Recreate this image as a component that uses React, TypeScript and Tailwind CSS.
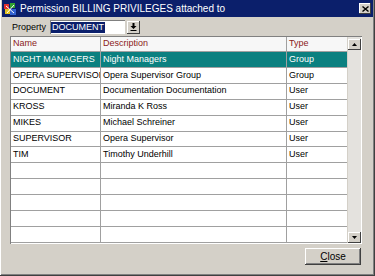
import React from "react";

const rows: [string, string, string][] = [
  ["NIGHT MANAGERS", "Night Managers", "Group"],
  ["OPERA SUPERVISOR", "Opera Supervisor Group", "Group"],
  ["DOCUMENT", "Documentation Documentation", "User"],
  ["KROSS", "Miranda K Ross", "User"],
  ["MIKES", "Michael Schreiner", "User"],
  ["SUPERVISOR", "Opera Supervisor", "User"],
  ["TIM", "Timothy Underhill", "User"],
  ["", "", ""],
  ["", "", ""],
  ["", "", ""],
  ["", "", ""],
  ["", "", ""],
];

function AppIcon() {
  return (
    <svg width="14" height="14" viewBox="0 0 14 14">
      <rect x="1" y="2" width="5" height="5" fill="#e03030" />
      <rect x="7" y="1" width="5" height="5" fill="#30a030" />
      <rect x="2" y="7" width="5" height="5" fill="#e0c020" />
      <rect x="7" y="7" width="6" height="6" fill="#3060d0" />
      <path d="M3 4 L11 11 M11 3 L4 11" stroke="#fff" strokeWidth="1" />
    </svg>
  );
}

export default function App() {
  return (
    <div className="w-[375px] h-[276px] bg-[#d4d0c8] flex flex-col px-[2px] pb-[2px] font-['Liberation_Sans',Arial,sans-serif] text-[9px] text-black shadow-[inset_-1px_-1px_#404040,inset_1px_0_#fff,inset_-2px_-2px_#808080]">
      {/* Title bar */}
      <div className="h-[17px] bg-[#0b1f6b] flex items-center pl-[1px] pr-[2px]">
        <AppIcon />
        <span className="ml-[3px] text-white text-[10px] leading-none">
          Permission BILLING PRIVILEGES attached to
        </span>
        <div className="ml-auto w-[12px] h-[11px] bg-[#d4d0c8] flex items-center justify-center shadow-[inset_-1px_-1px_#404040,inset_1px_1px_#fff]">
          <svg width="7" height="6" viewBox="0 0 7 6">
            <path d="M0.5 0.5 L6.5 5.5 M6.5 0.5 L0.5 5.5" stroke="#000" strokeWidth="1.4" />
          </svg>
        </div>
      </div>

      {/* Property row */}
      <div className="mt-[3px] h-[14px] flex items-center pl-[10px]">
        <span className="leading-none">Property</span>
        <div className="ml-[4px] w-[75px] h-[14px] bg-white flex items-center pl-[1px] shadow-[inset_1px_1px_#808080,inset_-1px_-1px_#fff]">
          <span className="bg-[#0b1f6b] text-white leading-[11px] h-[11px] px-[1px]">DOCUMENT</span>
        </div>
        <div className="ml-[2px] w-[13px] h-[13px] bg-[#d4d0c8] flex items-center justify-center shadow-[inset_-1px_-1px_#404040,inset_1px_1px_#fff]">
          <svg width="7" height="8" viewBox="0 0 7 8">
            <path d="M2.5 0 H4.5 V3 H6.5 L3.5 6 L0.5 3 H2.5 Z" fill="#000" />
            <rect x="0.5" y="7" width="6" height="1" fill="#000" />
          </svg>
        </div>
      </div>

      {/* Table */}
      <div className="mt-[2px] ml-[8px] w-[352px] h-[208px] flex p-[1px] shadow-[inset_1px_1px_#808080,inset_-1px_-1px_#fff]">
        <div className="flex-1 flex flex-col bg-white">
          <div className="h-[15px] flex border-b border-[#a0a0a0] bg-[#f7f7f7] text-[#8b1a1a]">
            <div className="w-[90px] border-r border-[#a0a0a0] pl-[2px] flex items-center">Name</div>
            <div className="w-[186px] border-r border-[#a0a0a0] pl-[2px] flex items-center">Description</div>
            <div className="flex-1 pl-[2px] flex items-center">Type</div>
          </div>
          {rows.map((r, i) => {
            const sel = i === 0;
            return (
              <div
                key={i}
                className={
                  sel
                    ? "h-[16px] flex border-b border-[#a0a0a0] bg-[#0b8080] text-white"
                    : "h-[16px] flex border-b border-[#a0a0a0] bg-white"
                }
              >
                <div className="w-[90px] border-r border-[#a0a0a0] pl-[2px] flex items-center whitespace-nowrap overflow-hidden">{r[0]}</div>
                <div className="w-[186px] border-r border-[#a0a0a0] pl-[2px] flex items-center whitespace-nowrap overflow-hidden">{r[1]}</div>
                <div className="flex-1 pl-[2px] flex items-center">{r[2]}</div>
              </div>
            );
          })}
        </div>
        <div className="w-[13px] ml-[1px] bg-[#e4e2de] flex flex-col justify-between pt-[2px]">
          <div className="w-[13px] h-[11px] bg-[#d4d0c8] flex items-center justify-center shadow-[inset_-1px_-1px_#404040,inset_1px_1px_#fff]">
            <svg width="5" height="3" viewBox="0 0 5 3"><path d="M0 3 L2.5 0 L5 3 Z" fill="#000" /></svg>
          </div>
          <div className="w-[13px] h-[11px] bg-[#d4d0c8] flex items-center justify-center shadow-[inset_-1px_-1px_#404040,inset_1px_1px_#fff]">
            <svg width="5" height="3" viewBox="0 0 5 3"><path d="M0 0 L2.5 3 L5 0 Z" fill="#000" /></svg>
          </div>
        </div>
      </div>

      {/* Close button */}
      <div className="mt-[4px] self-end mr-[12px] w-[56px] h-[17px] bg-[#d4d0c8] flex items-center justify-center text-[10px] shadow-[inset_-1px_-1px_#404040,inset_1px_1px_#fff,inset_-2px_-2px_#808080]">
        <span><span className="underline">C</span>lose</span>
      </div>
    </div>
  );
}
